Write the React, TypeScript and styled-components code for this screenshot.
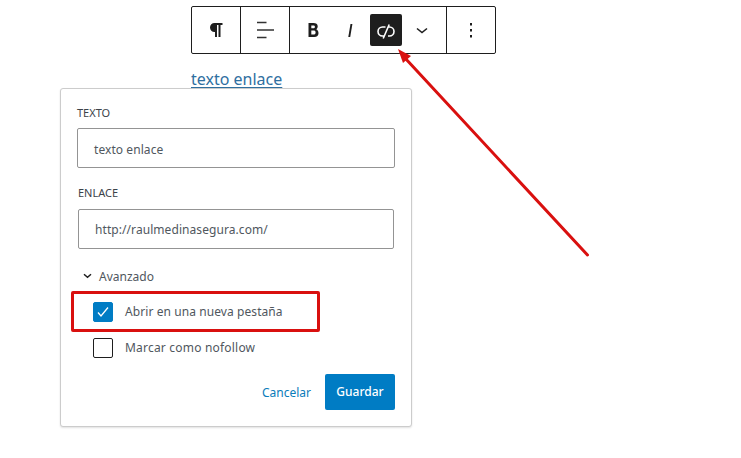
import styled, { createGlobalStyle } from 'styled-components';

const GlobalStyle = createGlobalStyle`
  html, body {
    margin: 0;
    padding: 0;
    background: #fff;
  }
  body {
    font-family: 'Noto Sans', 'Open Sans', sans-serif;
    color: #50575e;
  }
`;

function App() {
  return (
    <Page>
      <GlobalStyle />
      <Toolbar>
        <ToolGroup $width={49}>
          <ToolIcon width="24" height="24" viewBox="0 0 24 24">
            <path
              d="M18.500 5H10.500C8 5 6 7 6 9.500S8 14 10.500 14H11v5h2V7h1.500v12h2V7h2V5z"
              fill="#1e1e1e"
            />
          </ToolIcon>
        </ToolGroup>
        <ToolGroup $width={49}>
          <ToolIcon width="24" height="24" viewBox="0 0 24 24">
            <path d="M4 4.500h9.500M4 12h17M4 19.500h9.500" stroke="#333" strokeWidth="1.400" fill="none" />
          </ToolIcon>
        </ToolGroup>
        <FormatGroup>
          <FormatButton>
            <ToolIcon width="24" height="24" viewBox="0 0 24 24">
              <path
                transform="translate(1.500 0)"
                d="M14.700 11.300c1-.6 1.500-1.600 1.500-3 0-2.300-1.700-3.300-4.300-3.300H7v14h5.800c2.700 0 4.200-1.400 4.200-3.800 0-2-1-3.400-2.300-3.900zM9.800 7.400h1.900c1.100 0 1.700.4 1.700 1.300 0 1-.6 1.500-1.700 1.500H9.800V7.400zm2.200 9.200H9.800v-4h2.200c1.300 0 2.100.6 2.100 2s-.8 2-2.100 2z"
                fill="#1e1e1e"
              />
            </ToolIcon>
          </FormatButton>
          <FormatButton>
            <ToolIcon width="24" height="24" viewBox="0 0 24 24">
              <path d="M13.500 6L11.300 19h1.900l2.200-13z" fill="#1e1e1e" />
            </ToolIcon>
          </FormatButton>
          <FormatButton $active>
            <ToolIcon width="24" height="24" viewBox="0 0 24 24">
              <path
                d="M11.500 9H8.500a4.500 4.500 0 0 0 0 9h1.500M14 18h1.500a4.500 4.500 0 0 0 0-9h-1M9.200 20.500L15.200 6.500"
                stroke="#fff"
                strokeWidth="1.600"
                fill="none"
              />
            </ToolIcon>
          </FormatButton>
          <FormatButton>
            <ToolIcon width="24" height="24" viewBox="0 0 24 24">
              <path transform="translate(-1 0)" d="M7 10.500l5 4 5-4" stroke="#1e1e1e" strokeWidth="1.600" fill="none" />
            </ToolIcon>
          </FormatButton>
        </FormatGroup>
        <ToolGroup $width={49} $last>
          <ToolIcon width="24" height="24" viewBox="0 0 24 24">
            <path
              d="M11 5h2v2.400h-2zM11 11h2v2.400h-2zM11 17h2v2.400h-2z"
              fill="#1e1e1e"
            />
          </ToolIcon>
        </ToolGroup>
      </Toolbar>

      <LinkText>texto enlace</LinkText>

      <Popover>
        <FieldLabel>TEXTO</FieldLabel>
        <FieldBox>texto enlace</FieldBox>
        <FieldLabel $second>ENLACE</FieldLabel>
        <FieldBox $second>http://raulmedinasegura.com/</FieldBox>
        <Advanced>
          <svg width="12" height="12" viewBox="0 0 12 12">
            <path d="M3 4.200L6.500 7.200l3.500-3" stroke="#1e1e1e" strokeWidth="1.500" fill="none" />
          </svg>
          Avanzado
        </Advanced>
        <CheckRow>
          <CheckBox $checked>
            <svg width="16" height="16" viewBox="0 0 16 16">
              <path d="M3 8.500l3 3.500 7-8.500" stroke="#fff" strokeWidth="1.300" fill="none" />
            </svg>
          </CheckBox>
          <CheckLabel $spacing={0.08}>Abrir en una nueva pestaña</CheckLabel>
          <Highlight />
        </CheckRow>
        <CheckRow $second>
          <CheckBox />
          <CheckLabel $spacing={0.2}>Marcar como nofollow</CheckLabel>
        </CheckRow>
        <Actions>
          <CancelLink>Cancelar</CancelLink>
          <SaveButton>Guardar</SaveButton>
        </Actions>
      </Popover>

      <ArrowLayer width="741" height="458" viewBox="0 0 741 458">
        <path d="M587.500 255L405 58" stroke="#d9100f" strokeWidth="3" strokeLinecap="round" fill="none" />
        <path d="M398 49l13 7-8 7z" fill="#d9100f" />
      </ArrowLayer>
    </Page>
  );
}
export default App;

const Page = styled.div`
  position: relative;
  width: 741px;
  height: 458px;
  overflow: hidden;
  padding-top: 6px;
  box-sizing: border-box;
  background: #fff;
`;

const Toolbar = styled.div`
  display: flex;
  width: 305px;
  height: 48px;
  margin-left: 191px;
  box-sizing: border-box;
  border: 1px solid #1e1e1e;
  border-radius: 2px;
`;

const ToolGroup = styled.div<{ $width: number; $last?: boolean }>`
  display: flex;
  align-items: center;
  justify-content: center;
  flex: ${(props) => (props.$last ? '1' : `0 0 ${props.$width}px`)};
  border-right: ${(props) => (props.$last ? 'none' : '1px solid #1e1e1e')};
  box-sizing: border-box;
`;

const FormatGroup = styled.div`
  display: flex;
  align-items: center;
  flex: 0 0 157px;
  padding-left: 6px;
  box-sizing: border-box;
  border-right: 1px solid #1e1e1e;
`;

const FormatButton = styled.div<{ $active?: boolean }>`
  display: flex;
  align-items: center;
  justify-content: center;
  width: 32px;
  height: 32px;
  margin-right: 5px;
  border-radius: 2px;
  background: ${(props) => (props.$active ? '#1e1e1e' : 'transparent')};
`;

const ToolIcon = styled.svg`
  display: block;
`;

const LinkText = styled.div`
  margin: 14px 0 0 191px;
  height: 23px;
  font-size: 16px;
  line-height: 23px;
  color: #2f6f9f;
  text-decoration: underline;
  text-underline-offset: 2px;
`;

const Popover = styled.div`
  width: 352px;
  height: 339px;
  margin: -3px 0 0 60px;
  padding: 15px 16px 0;
  box-sizing: border-box;
  background: #fff;
  border: 1px solid #ccc;
  border-radius: 3px;
  box-shadow: 0 1px 2px rgba(0, 0, 0, 0.12);
`;

const FieldLabel = styled.div<{ $second?: boolean }>`
  font-size: 11px;
  line-height: 18px;
  color: #3c434a;
  margin: ${(props) => (props.$second ? '16px 0 7px 1px' : '0 0 6px')};
`;

const FieldBox = styled.div<{ $second?: boolean }>`
  width: ${(props) => (props.$second ? '316px' : '318px')};
  height: 40px;
  margin-left: ${(props) => (props.$second ? '1px' : '0')};
  padding: ${(props) => (props.$second ? '0' : '1px')} 0 0 16px;
  box-sizing: border-box;
  border: 1px solid #949494;
  border-radius: 2px;
  font-size: 12px;
  line-height: 40px;
  letter-spacing: 0.07px;
  color: #50575e;
`;

const Advanced = styled.div`
  display: flex;
  align-items: center;
  gap: 6px;
  margin: 18px 0 0 4px;
  height: 18px;
  font-size: 12px;
  color: #50575e;
`;

const CheckRow = styled.div<{ $second?: boolean }>`
  position: relative;
  display: flex;
  align-items: center;
  gap: 12px;
  height: 20px;
  margin: ${(props) => (props.$second ? '16px 0 0 16px' : '17px 0 0 16px')};
`;

const CheckLabel = styled.span<{ $spacing: number }>`
  padding-bottom: 2px;
  font-size: 12px;
  letter-spacing: ${(props) => props.$spacing}px;
  color: #50575e;
`;

const CheckBox = styled.div<{ $checked?: boolean }>`
  display: flex;
  align-items: center;
  justify-content: center;
  width: 20px;
  height: 20px;
  box-sizing: border-box;
  border: 1px solid ${(props) => (props.$checked ? '#007cc4' : '#1e1e1e')};
  border-radius: 2px;
  background: ${(props) => (props.$checked ? '#007cc4' : '#fff')};
`;

const Highlight = styled.div`
  position: absolute;
  left: -22px;
  top: -11px;
  width: 249px;
  height: 41px;
  box-sizing: border-box;
  border: 3px solid #d9100f;
  border-radius: 2px;
`;

const Actions = styled.div`
  display: flex;
  align-items: center;
  justify-content: flex-end;
  gap: 14px;
  width: 318px;
  margin-top: 16px;
`;

const CancelLink = styled.div`
  font-size: 12px;
  color: #0a7cba;
`;

const SaveButton = styled.div`
  width: 70px;
  height: 36px;
  border-radius: 2px;
  background: #007cc4;
  color: #fff;
  font-size: 12px;
  font-weight: 500;
  line-height: 36px;
  text-align: center;
`;

const ArrowLayer = styled.svg`
  position: absolute;
  left: 0;
  top: 0;
  pointer-events: none;
`;
